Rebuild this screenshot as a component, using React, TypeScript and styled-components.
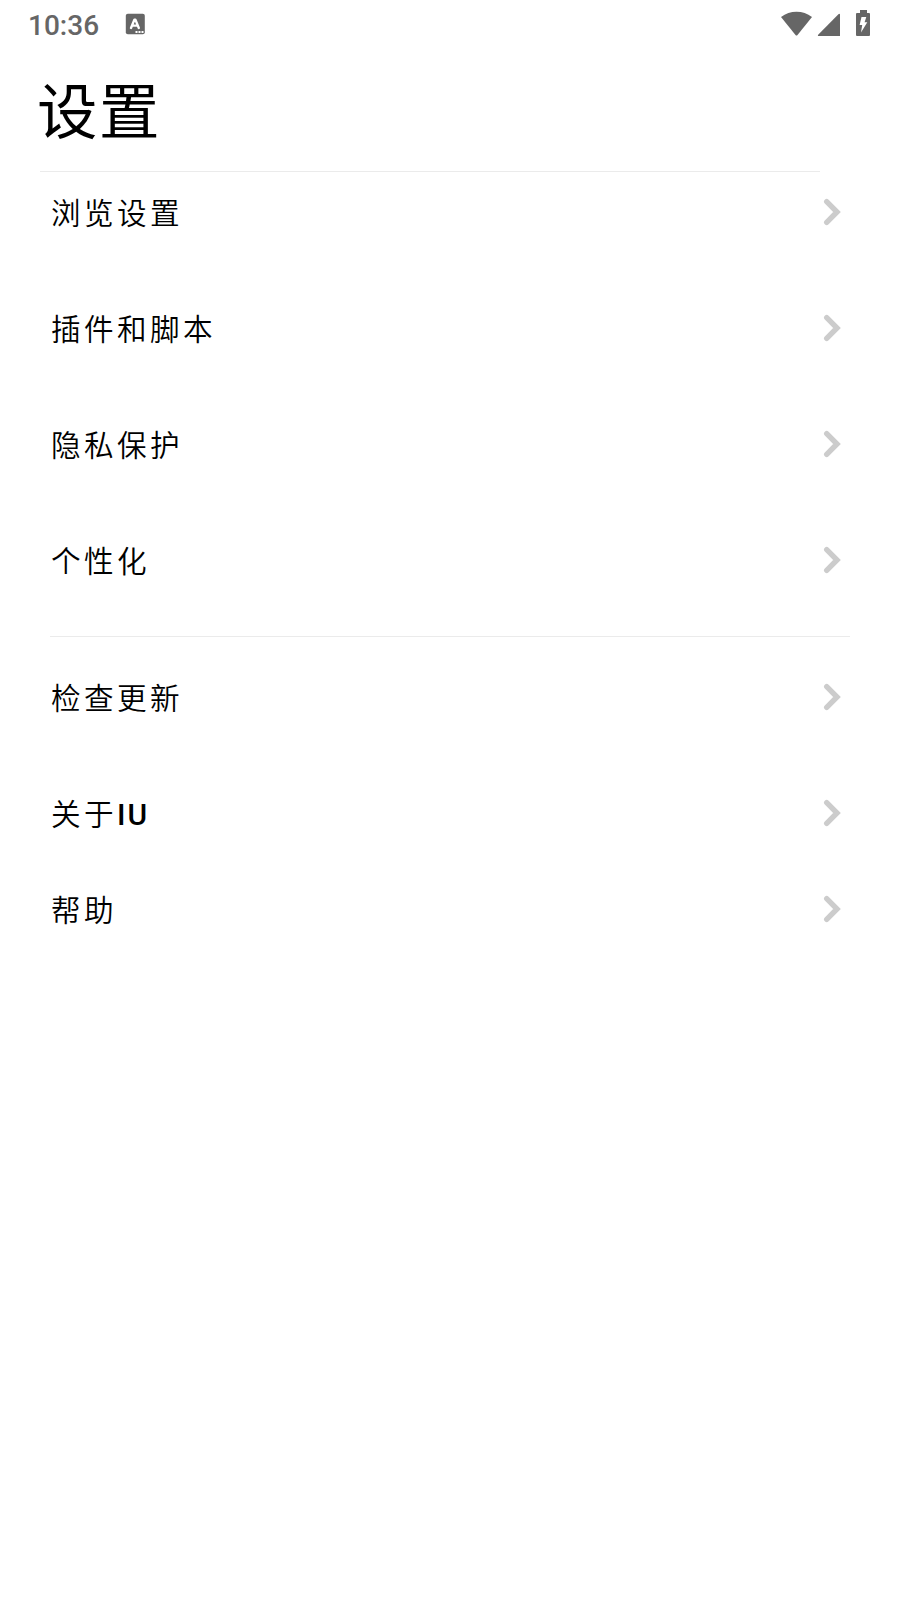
import React from "react";
import styled, { createGlobalStyle } from "styled-components";

const GlobalStyle = createGlobalStyle`
  * { box-sizing: border-box; }
  body { margin: 0; background: #fff; }
`;

const Screen = styled.div`
  display: flex;
  flex-direction: column;
  width: 900px;
  height: 1600px;
  background: #fff;
  color: #000;
  font-family: Roboto, "Noto Sans CJK SC", sans-serif;
`;

const StatusBar = styled.header`
  display: flex;
  align-items: center;
  justify-content: space-between;
  height: 50px;
  padding: 0 29px 0 28px;
  color: #666;
`;

const StatusGroup = styled.div<{ $gap: number }>`
  display: flex;
  align-items: center;
  gap: ${(p) => p.$gap}px;
`;

const Clock = styled.span`
  width: 72px;
  font-size: 28px;
  font-weight: 500;
  line-height: 50px;
  padding-top: 1px;
  white-space: nowrap;
`;

const StatusIcon = styled.svg`
  display: block;
  height: 50px;
  fill: currentColor;
`;

const Title = styled.h1`
  margin: 0;
  height: 121px;
  padding-left: 37px;
  font-size: 60.5px;
  font-weight: 400;
  letter-spacing: 1.5px;
  line-height: 127px;
`;

const Divider = styled.hr<{ $left: number; $right: number }>`
  flex: none;
  width: auto;
  height: 1px;
  margin: 0 ${(p) => p.$right}px 0 ${(p) => p.$left}px;
  border: 0;
  background: #ebebeb;
`;

const Section = styled.nav<{ $top?: number; $bottom?: number }>`
  display: flex;
  flex-direction: column;
  padding: ${(p) => p.$top ?? 0}px 60px ${(p) => p.$bottom ?? 0}px 51px;
`;

const Row = styled.div<{ $gap: number }>`
  display: flex;
  align-items: center;
  justify-content: space-between;
  height: 80px;
  margin-bottom: ${(p) => p.$gap}px;
`;

const Label = styled.span`
  padding-top: 4px;
  font-size: 29.6px;
  font-weight: 350;
  letter-spacing: 3.4px;
  line-height: 44px;
`;

const Latin = styled.span`
  font-size: 30px;
  font-weight: 500;
  letter-spacing: 2px;
`;

const Chevron = () => (
  <svg width="16" height="26" viewBox="0 0 16 26" fill="none" overflow="visible">
    <path d="M2.7 2.7 13 13 2.7 23.3" stroke="#ccc" strokeWidth="5.4" strokeLinecap="round" />
  </svg>
);

const Item = ({ children, gap = 36 }: { children: React.ReactNode; gap?: number }) => (
  <Row $gap={gap}>
    <Label>{children}</Label>
    <Chevron />
  </Row>
);

export default function App() {
  return (
    <Screen>
      <GlobalStyle />
      <StatusBar>
        <StatusGroup $gap={25}>
          <Clock>10:36</Clock>
          <StatusIcon width="20" viewBox="0 0 20 50">
            <rect x="0.8" y="13.8" width="19" height="20.4" rx="2" />
            <path
              d="M6 28 9.4 19.6H10.4L13.8 28M7.5 25.6h4.8"
              fill="none"
              stroke="#fff"
              strokeWidth="2.4"
              strokeLinejoin="round"
              strokeLinecap="round"
            />
            <path d="M10.5 31h2v2h-2zM13.5 31h2v2h-2zM16.5 31h2v2h-2z" fill="#fff" />
          </StatusIcon>
        </StatusGroup>
        <StatusIcon width="90" viewBox="781 0 90 50">
          <path d="M781 17Q788 11.7 796.5 11.7T812 17L797.5 35Q796.5 36 795.5 35Z" />
          <path d="M840 14.5V36H819Q817 36 818.4 34.5L838.4 14.3Q840 13 840 14.5Z" />
          <path d="M860 10h7v3h2q1 0 1 1v21q0 1-1 1h-12q-1 0-1-1V14q0-1 1-1h3Z" />
          <path d="M861.5 17h4.8l-1.7 5.3h2.7l-6.3 10.2 1.2-7.5h-2.6Z" fill="#fff" />
        </StatusIcon>
      </StatusBar>
      <Title>设置</Title>
      <Divider $left={40} $right={80} />
      <Section>
        <Item>浏览设置</Item>
        <Item>插件和脚本</Item>
        <Item>隐私保护</Item>
        <Item>个性化</Item>
      </Section>
      <Divider $left={50} $right={50} />
      <Section $top={20}>
        <Item>检查更新</Item>
        <Item gap={16}>
          关于<Latin>IU</Latin>
        </Item>
        <Item gap={0}>帮助</Item>
      </Section>
    </Screen>
  );
}
